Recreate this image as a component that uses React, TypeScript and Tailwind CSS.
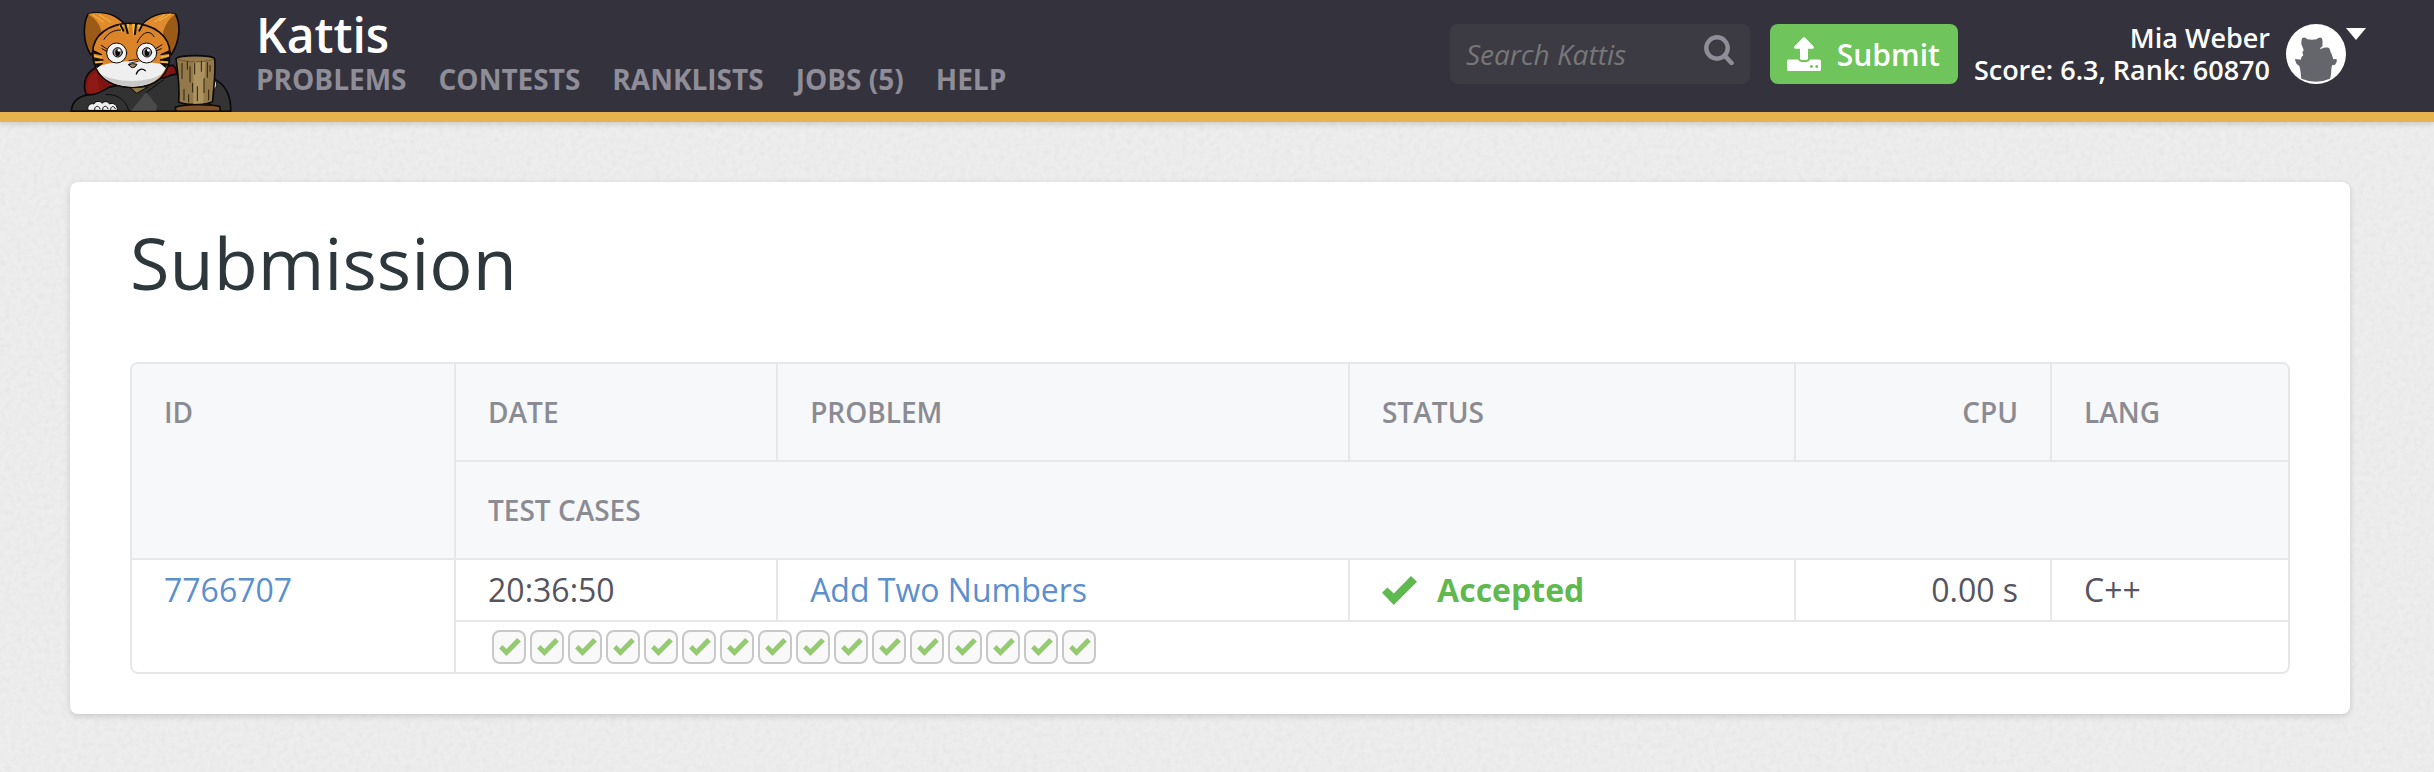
import React from "react";

const navItems = ["Problems", "Contests", "Ranklists", "Jobs (5)", "Help"];

function CatLogo() {
  return (
    <svg viewBox="30 36 486 300" className="h-[100px] w-[162px] shrink-0" aria-hidden="true">
      <g stroke="#0b0b0b" strokeWidth="5" strokeLinejoin="round" strokeLinecap="round">
        <path d="M78 283C66 250 78 216 108 204L340 196C352 208 352 224 345 240L200 284Z" fill="#7e1512" />
        <path d="M84 280C76 250 88 224 110 216L120 280Z" fill="#8f1a15" stroke="none" />
        <path d="M460 236C496 250 514 290 512 334H440Z" fill="#343434" />
        <path d="M461 240C473 242 474 262 462 268Z" fill="#d7d7d7" strokeWidth="3" />
        <path d="M34 334C36 300 62 284 98 284C118 280 130 272 146 262L200 250L318 232C340 218 356 222 370 228L470 334Z" fill="#323232" />
        <path d="M258 276L292 318L288 334H212L240 300Z" fill="#4a4a4a" stroke="none" />
        <path d="M138 284C168 280 200 300 206 332M258 278L310 240" fill="none" strokeWidth="3" />
        <path d="M205 258L230 280L262 262Z" fill="#8c7746" strokeWidth="3" />
        <path d="M92 164C66 122 70 70 84 42C128 32 172 44 196 76Z" fill="#9b5a16" />
        <path d="M84 42C124 34 168 44 190 74C160 84 138 92 124 108C128 82 108 56 84 42Z" fill="#e08c2e" stroke="none" />
        <path d="M334 164C362 120 362 70 346 42C310 36 270 46 246 76Z" fill="#9b5a16" />
        <path d="M346 42C312 36 272 48 248 74C276 82 296 92 308 108C310 82 326 56 346 42Z" fill="#e08c2e" stroke="none" />
        <path d="M98 44L130 66M118 44L152 66M332 42L298 62M314 44L284 66" stroke="#f5bd45" strokeWidth="3" />
        <path d="M98 158C98 106 146 70 212 70C284 70 330 110 330 160C330 226 288 262 218 262C144 262 98 222 98 158Z" fill="#dc8429" />
        <path d="M110 204C128 190 176 186 206 184L226 184C262 188 300 188 320 198C302 238 268 260 218 260C164 260 126 238 110 204Z" fill="#efefef" stroke="none" />
        <path d="M124 222C160 248 266 252 308 220C290 246 262 258 218 259C174 258 142 246 124 222Z" fill="#c9c9c9" stroke="none" />
        <path d="M176 74L184 98L192 74ZM194 72L202 110L208 72ZM216 71L220 106L229 72ZM234 73L236 96L248 76Z" fill="#f2bd3d" stroke="none" />
        <path d="M182 76L190 92M196 72L203 100M228 72L225 102M246 76L238 92" strokeWidth="6" />
        <path d="M101 152L126 164L102 160ZM102 174L130 180L104 182ZM106 192L128 190L112 202ZM328 152L302 164L328 160ZM328 172L300 180L326 182ZM322 192L302 190L316 202Z" fill="#0b0b0b" strokeWidth="3" />
        <path d="M104 168L124 172M108 188L126 186M326 167L304 171M322 187L304 186" stroke="#f2bd3d" strokeWidth="4" />
        <path d="M132 118C144 98 162 90 182 90M232 128C240 108 256 94 268 98C276 100 280 106 282 110M124 136L142 148M126 146L140 154M306 134L284 148M304 146L286 154" fill="none" strokeWidth="3" />
        <circle cx="170" cy="159" r="30" fill="#f4f4f4" strokeWidth="3" />
        <circle cx="260" cy="159" r="30" fill="#f4f4f4" strokeWidth="3" />
        <circle cx="173" cy="157" r="14" fill="#929292" strokeWidth="3" />
        <circle cx="261" cy="157" r="14" fill="#929292" strokeWidth="3" />
        <ellipse cx="173" cy="158" rx="7" ry="10" fill="#0b0b0b" stroke="none" />
        <ellipse cx="261" cy="158" rx="7" ry="10" fill="#0b0b0b" stroke="none" />
        <circle cx="177" cy="151" r="4" fill="#fff" stroke="none" />
        <circle cx="265" cy="151" r="4" fill="#fff" stroke="none" />
        <path d="M207 182L232 178M208 190L234 184" strokeWidth="2.5" />
        <path d="M206 194Q218 188 231 193Q226 204 217 203Q210 201 206 194Z" fill="#a08a68" strokeWidth="3" />
        <path d="M229 222C234 206 248 204 256 212" fill="none" strokeWidth="4" />
        <path d="M84 330C80 318 90 308 102 312C106 302 122 302 126 310C132 302 146 304 148 312C160 306 174 316 172 330Z" fill="#eee" strokeWidth="3" />
        <path d="M104 330C102 318 116 314 120 326M128 330C126 318 140 314 144 326M152 328C152 318 162 316 166 326" fill="none" strokeWidth="3" />
        <path d="M348 176C360 164 452 164 464 176C468 220 460 270 458 304C440 316 376 316 356 306C360 260 354 220 348 176Z" fill="#94794a" />
        <path d="M400 184L436 184L430 310L400 312Z" fill="#ad9360" stroke="none" />
        <path d="M354 178C380 188 434 188 460 178" fill="none" stroke="#6f5a31" strokeWidth="3" />
        <path d="M366 190V236M372 268V300M382 184V208M390 200V246M386 284V306M404 190V222M412 260V302M424 184V214M432 236V278M442 188V232M450 196V214M446 270V300M398 250V276" fill="none" stroke="#2b220f" strokeWidth="3" />
        <path d="M346 322C368 312 458 312 480 320L480 334H348Z" fill="#805127" />
      </g>
      <path d="M32 334H514" stroke="#0b0b0b" strokeWidth="4" />
    </svg>
  );
}

function SearchIcon() {
  return (
    <svg viewBox="0 0 30 30" className="size-[30px]" fill="none" stroke="#8e8d98" aria-hidden="true">
      <circle cx="13" cy="13" r="10.7" strokeWidth="4.4" />
      <path d="M20.5 20.5L27.5 28" strokeWidth="4.6" strokeLinecap="round" />
    </svg>
  );
}

function UploadIcon() {
  return (
    <svg viewBox="0 0 34 34" className="size-[34px]" fill="#fff" aria-hidden="true">
      <path d="M16 0.6Q17 -0.2 18 0.6L26.6 9.6Q27.4 11.6 25.6 11.8H21V21.6Q21 23 19.4 23H14.6Q13 23 13 21.6V11.8H8.4Q6.6 11.6 7.4 9.6Z" />
      <path
        fillRule="evenodd"
        d="M1.6 22.6H11Q12 25 14.4 25H19.6Q22 25 23 22.6H32.4Q34 22.6 34 24.2V32.4Q34 34 32.4 34H1.6Q0 34 0 32.4V24.2Q0 22.6 1.6 22.6ZM24.4 28a1.5 1.5 0 1 0 .01 0ZM29.8 28a1.5 1.5 0 1 0 .01 0Z"
      />
    </svg>
  );
}

function Check({ className }: { className: string }) {
  return (
    <svg viewBox="0 0 104 86" className={className} fill="currentColor" aria-hidden="true">
      <path d="M0 50L16 34L35 52L86 0L104 17L35 86Z" />
    </svg>
  );
}

function Avatar() {
  return (
    <svg viewBox="0 0 180 180" className="size-[60px]" aria-hidden="true">
      <circle cx="90" cy="90" r="90" fill="#fff" />
      <path
        fill="#65666b"
        d="M49 42C55 38 60 42 64 46Q78 48 92 46C96 42 102 38 107 42C112 50 108 58 110 66C104 70 101 74 104 76C110 71 122 69 129 72C134 78 132 84 136 88L142 106L152 105L152 114L147 122L138 124C134 140 137 155 132 164Q90 182 46 164C44 150 44 138 40 126L32 120L27 108L28 105L44 107C46 100 48 96 52 94L49 86L53 78L46 60C46 54 46 46 49 42Z"
      />
    </svg>
  );
}

function PaperTexture() {
  return (
    <svg className="pointer-events-none absolute inset-0 h-full w-full opacity-[0.05]" aria-hidden="true">
      <filter id="paper">
        <feTurbulence type="fractalNoise" baseFrequency="0.18" numOctaves="2" stitchTiles="stitch" />
        <feColorMatrix values="1.4 0 0 0 0  1.4 0 0 0 0  1.4 0 0 0 0  0 0 0 0 1" />
      </filter>
      <rect width="100%" height="100%" filter="url(#paper)" />
    </svg>
  );
}

function Header() {
  return (
    <header className="relative border-b-10 border-[#e6b34f] bg-[#34333d] pr-[68px] pl-[70px] shadow-[0_2px_6px_rgba(0,0,0,0.15)]">
      <div className="flex h-28 justify-between">
        <div className="flex gap-6">
          <div className="flex items-end">
            <CatLogo />
          </div>
          <div className="pt-[7px]">
            <a href="#" className="block text-[48px] leading-[56px] font-semibold text-white">Kattis</a>
            <nav className="flex gap-8">
              {navItems.map((item) => (
                <a key={item} href="#" className="text-[28px] leading-8 font-bold whitespace-nowrap text-[#8e8d98] uppercase">
                  {item}
                </a>
              ))}
            </nav>
          </div>
        </div>
        <div className="flex items-center pb-1">
          <form className="relative mr-5">
            <input
              type="text"
              aria-label="Search Kattis"
              placeholder="Search Kattis"
              className="h-[60px] w-[300px] rounded-lg bg-[#3c3b44] px-4 text-[28px] text-white italic outline-none placeholder:text-[#777777]"
            />
            <button type="button" aria-label="Search" className="absolute top-[11px] right-4">
              <SearchIcon />
            </button>
          </form>
          <button type="button" className="mr-4 flex h-[60px] w-[188px] items-center justify-between rounded-lg bg-[#6fc45c] pr-[18px] pl-[17px] text-[30px] font-semibold text-white">
            <UploadIcon />
            Submit
          </button>
          <a href="#" className="mr-4 text-right text-[27px] leading-8 font-semibold whitespace-nowrap text-white">
            <span className="block">Mia Weber</span>
            <span className="block">Score: 6.3, Rank: 60870</span>
          </a>
          <button type="button" aria-label="Account menu" className="flex items-start">
            <Avatar />
            <svg viewBox="0 0 20 12" className="mt-1 h-3 w-5" fill="#fff" aria-hidden="true">
              <path d="M0 0H20L10 12Z" />
            </svg>
          </button>
        </div>
      </div>
    </header>
  );
}

const th = "border-[#e6e7e8] border-b-2 bg-[#f7f8fa] px-8 text-[28px] leading-8 font-semibold uppercase text-[#8b8b93]";
const td = "border-[#e6e7e8] px-8 text-[32px] leading-10 font-normal text-[#55545f]";

function SubmissionTable() {
  return (
    <div className="overflow-hidden rounded-lg border-2 border-[#e6e7e8]">
      <table className="w-full table-fixed border-separate border-spacing-0 text-left">
        <colgroup>
          <col className="w-[15.03%]" />
          <col className="w-[14.94%]" />
          <col className="w-[26.53%]" />
          <col className="w-[20.69%]" />
          <col className="w-[11.87%]" />
          <col />
        </colgroup>
        <thead>
          <tr className="h-[98px]">
            <th rowSpan={2} className={`${th} border-r-2 py-8 align-top`}>ID</th>
            <th className={`${th} border-r-2`}>Date</th>
            <th className={`${th} border-r-2`}>Problem</th>
            <th className={`${th} border-r-2`}>Status</th>
            <th className={`${th} border-r-2 text-right`}>CPU</th>
            <th className={th}>Lang</th>
          </tr>
          <tr className="h-[98px]">
            <th colSpan={5} className={th}>Test cases</th>
          </tr>
        </thead>
        <tbody>
          <tr className="h-[62px]">
            <td rowSpan={2} className={`${td} border-r-2 py-2.5 align-top`}>
              <a href="#" className="text-[#5b8fce]">7766707</a>
            </td>
            <td className={`${td} border-r-2 border-b-2`}>20:36:50</td>
            <td className={`${td} border-r-2 border-b-2`}>
              <a href="#" className="text-[#5b8fce]">Add Two Numbers</a>
            </td>
            <td className={`${td} border-r-2 border-b-2`}>
              <span className="flex items-center gap-5 font-bold text-[#5fb94f]">
                <Check className="h-[29px] w-[35px]" />
                Accepted
              </span>
            </td>
            <td className={`${td} border-r-2 border-b-2 text-right`}>0.00 s</td>
            <td className={`${td} border-b-2`}>C++</td>
          </tr>
          <tr className="h-[50px]">
            <td colSpan={5} className={td}>
              <div className="flex gap-1 pl-1">
                {Array.from({ length: 16 }, (_, i) => (
                  <span
                    key={i}
                    role="img"
                    aria-label={`Test case ${i + 1}: accepted`}
                    className="flex size-[34px] items-center justify-center rounded-lg border-2 border-[#c8c8c8] bg-[#f9f9f9] text-[#93cc6f]"
                  >
                    <Check className="ml-0.5 h-[18px] w-[22px]" />
                  </span>
                ))}
              </div>
            </td>
          </tr>
        </tbody>
      </table>
    </div>
  );
}

export default function App() {
  return (
    <div className="relative min-h-screen bg-[#ededed] font-['Open_Sans',sans-serif]">
      <PaperTexture />
      <Header />
      <main className="relative pt-[60px] pr-[84px] pb-[58px] pl-[70px]">
        <section className="rounded-lg bg-white px-[60px] pt-11 pb-10 shadow-[0_2px_6px_rgba(0,0,0,0.15)]">
          <h1 className="mb-16 text-[72px] leading-[72px] font-normal text-[#2d373c]">Submission</h1>
          <SubmissionTable />
        </section>
      </main>
    </div>
  );
}
